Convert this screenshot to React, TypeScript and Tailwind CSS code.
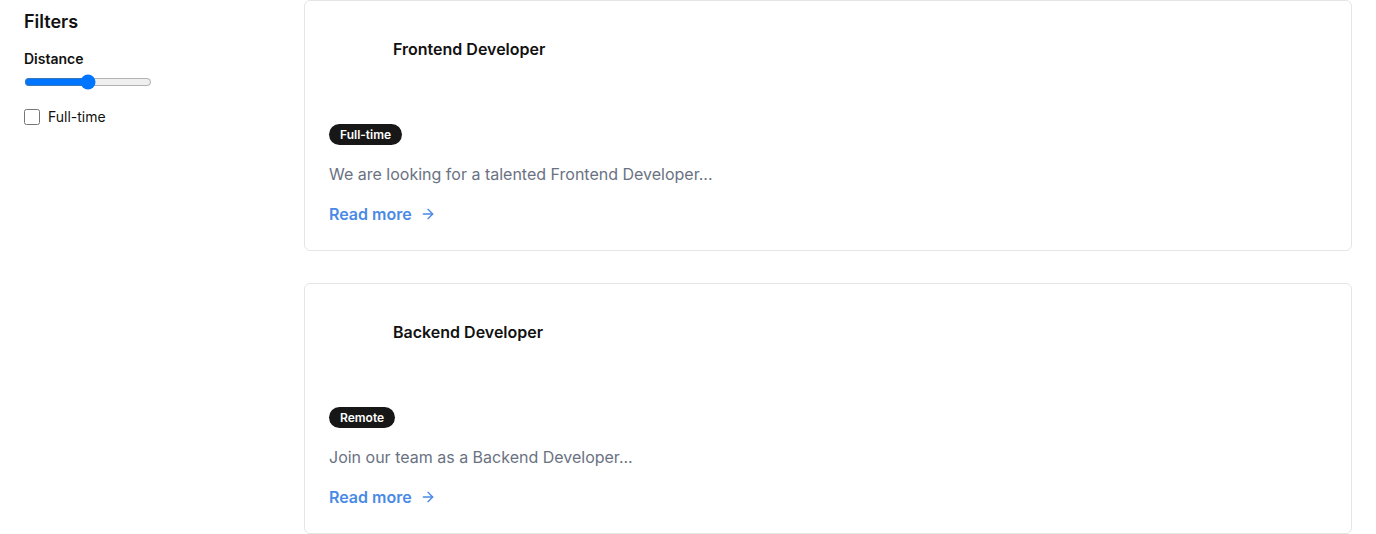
import { ArrowRight } from 'lucide-react';

const jobs = [
  {
    title: 'Frontend Developer',
    tag: 'Full-time',
    description: 'We are looking for a talented Frontend Developer...',
  },
  {
    title: 'Backend Developer',
    tag: 'Remote',
    description: 'Join our team as a Backend Developer...',
  },
];

const JobCard = ({ title, tag, description }: (typeof jobs)[number]) => {
  return (
    <div className="h-[251px] rounded-md border border-[#e5e5e5] bg-white px-6 pt-6">
      {/* Header */}
      <div className="flex items-center gap-4">
        <div className="h-12 w-12 shrink-0" />
        <h3 className="text-base font-semibold text-[#111111]">{title}</h3>
      </div>

      <span className="mt-[51px] inline-flex h-[21px] items-center rounded-full bg-[#171717] px-[11px] text-xs font-semibold text-white">
        {tag}
      </span>

      <p className="mt-[17px] text-base text-gray-500">{description}</p>

      <a href="#" className="mt-4 inline-flex items-center gap-2 text-base font-semibold text-[#4a8ae6]">
        Read more
        <ArrowRight className="h-4 w-4" strokeWidth={2} />
      </a>
    </div>
  );
};

export default function App() {
  return (
    <div className="flex min-h-screen bg-white font-['Inter',sans-serif] text-[#111111]">
      {/* Sidebar */}
      <aside className="w-[304px] shrink-0 px-6 pt-2">
        <h2 className="text-lg font-semibold">Filters</h2>
        <div className="mt-[13px]">
          <label className="block text-sm font-semibold">Distance</label>
          <input type="range" min={0} max={100} defaultValue={50} className="mt-[5px] block w-32" />
        </div>
        <label className="mt-[17px] flex items-center gap-2 text-sm">
          <input type="checkbox" className="m-0 h-4 w-4" />
          Full-time
        </label>
      </aside>

      {/* Job list */}
      <main className="flex flex-1 flex-col gap-8 pr-6">
        {jobs.map((job) => (
          <JobCard key={job.title} {...job} />
        ))}
      </main>
    </div>
  );
}
